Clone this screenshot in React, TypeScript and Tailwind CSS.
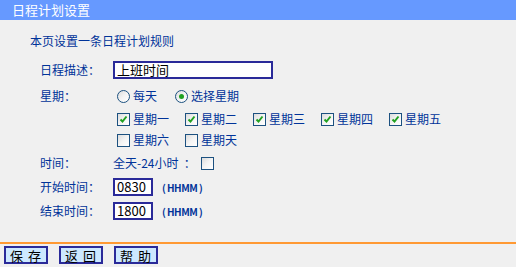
import type { ReactNode } from 'react'

// Router-style schedule rule form: blue title bar, label/value rows,
// orange rule and the three square buttons at the bottom.

const days = ['星期一', '星期二', '星期三', '星期四', '星期五', '星期六', '星期天']
const checked = [true, true, true, true, true, false, false]

function Box({ on }: { on?: boolean }) {
  return (
    <span className="relative inline-block h-[13px] w-[13px] shrink-0 border border-[#1c5180] bg-gradient-to-br from-[#dcdcdc] via-[#f4f4f4] to-white">
      {on && (
        <svg viewBox="0 0 11 11" className="absolute left-0 top-0 h-[11px] w-[11px]">
          <path d="M2.5 5.5 L4.5 7.5 L8.5 2.5" fill="none" stroke="#21a121" strokeWidth="2" />
        </svg>
      )}
    </span>
  )
}

function Radio({ on }: { on?: boolean }) {
  return (
    <span className="flex h-[13px] w-[13px] shrink-0 items-center justify-center rounded-full border border-[#1c5180] bg-gradient-to-br from-[#dcdcdc] via-[#f4f4f4] to-white">
      {on && <span className="h-[5px] w-[5px] rounded-full bg-[#21a121]" />}
    </span>
  )
}

function Row({ label, h = 'h-[18px]', mt, children }: { label?: string; h?: string; mt: string; children: ReactNode }) {
  return (
    <div className={`flex items-center ${h} ${mt}`}>
      <span className="w-[73px] shrink-0">{label}</span>
      <div className="flex items-center">{children}</div>
    </div>
  )
}

function Btn({ text }: { text: string }) {
  return (
    <button className="h-[18px] w-[44px] border-2 border-[#2a2a99] bg-[#cce8ff] text-[13px] leading-none tracking-[5px] pl-[4px] text-black">
      {text}
    </button>
  )
}

export default function App() {
  return (
    <div className="h-[267px] w-[516px] overflow-hidden bg-[#f0f0f0] text-[12px] text-[#003399] [font-family:'Noto_Sans_CJK_SC',sans-serif]">
      <div className="flex h-[20px] items-center bg-[#6699ff] pl-[12px] text-[13px] text-white">日程计划设置</div>

      <div className="mt-[10px] flex h-[22px] items-center pl-[30px]">本页设置一条日程计划规则</div>

      <div className="pl-[40px]">
        <Row label="日程描述：" mt="mt-[9px]">
          <div className="flex h-[18px] w-[160px] items-center border-2 border-[#2a2a99] bg-white pl-[2px] text-[13px] text-black">
            上班时间
          </div>
        </Row>

        <Row label="星期：" mt="mt-[8px]">
          <label className="flex w-[62px] items-center gap-[3px] pl-[4px]">
            <Radio />
            每天
          </label>
          <label className="flex items-center gap-[3px]">
            <Radio on />
            选择星期
          </label>
        </Row>

        <Row mt="mt-[5px]">
          <div className="flex pl-[4px]">
            {days.slice(0, 5).map((d, i) => (
              <label key={d} className="flex w-[68px] items-center gap-[3px]">
                <Box on={checked[i]} />
                {d}
              </label>
            ))}
          </div>
        </Row>

        <Row mt="mt-[3px]">
          <div className="flex pl-[4px]">
            {days.slice(5).map((d, i) => (
              <label key={d} className="flex w-[68px] items-center gap-[3px]">
                <Box on={checked[i + 5]} />
                {d}
              </label>
            ))}
          </div>
        </Row>

        <Row label="时间：" mt="mt-[5px]">
          <span className="w-[88px]">全天-24小时&nbsp;&nbsp;：</span>
          <Box />
        </Row>

        <Row label="开始时间：" mt="mt-[6px]">
          <div className="flex h-[18px] w-[40px] items-center border-2 border-[#2a2a99] bg-white pl-[2px] text-[13px] text-black">0830</div>
          <span className="ml-[9px] text-[10px] font-bold tracking-[-0.5px]">(&nbsp;HHMM&nbsp;)</span>
        </Row>

        <Row label="结束时间：" mt="mt-[6px]">
          <div className="flex h-[18px] w-[40px] items-center border-2 border-[#2a2a99] bg-white pl-[2px] text-[13px] text-black">1800</div>
          <span className="ml-[9px] text-[10px] font-bold tracking-[-0.5px]">(&nbsp;HHMM&nbsp;)</span>
        </Row>
      </div>

      <div className="mt-[22px] h-[2px] bg-[#ff9933]" />

      <div className="mt-[2px] flex gap-[11px] pl-[4px]">
        <Btn text="保存" />
        <Btn text="返回" />
        <Btn text="帮助" />
      </div>
    </div>
  )
}
